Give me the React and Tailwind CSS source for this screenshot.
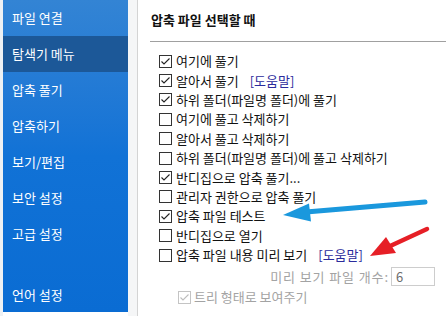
import React from 'react';

const menus = ['파일 연결', '탐색기 메뉴', '압축 풀기', '압축하기', '보기/편집', '보안 설정', '고급 설정'];

const options = [
  { label: '여기에 풀기', checked: true },
  { label: '알아서 풀기', checked: true, help: true },
  { label: '하위 폴더(파일명 폴더)에 풀기', checked: true },
  { label: '여기에 풀고 삭제하기', checked: false },
  { label: '알아서 풀고 삭제하기', checked: false },
  { label: '하위 폴더(파일명 폴더)에 풀고 삭제하기', checked: false },
  { label: '반디집으로 압축 풀기...', checked: true },
  { label: '관리자 권한으로 압축 풀기', checked: false },
  { label: '압축 파일 테스트', checked: true },
  { label: '반디집으로 열기', checked: false },
  { label: '압축 파일 내용 미리 보기', checked: false, help: true },
];

const CheckBox = ({ checked, disabled }) => (
  <span
    className={`flex h-[13px] w-[13px] shrink-0 items-center justify-center border bg-white ${
      disabled ? 'border-[#c4c4c4]' : 'border-[#333333]'
    }`}
  >
    {checked && (
      <svg width="11" height="11" viewBox="0 0 11 11">
        <path
          d="M1.5 5.5 L4 8 L9.5 2.5"
          fill="none"
          stroke={disabled ? '#bdbdbd' : '#222222'}
          strokeWidth="1.1"
        />
      </svg>
    )}
  </span>
);

const App = () => {
  return (
    <div className="relative flex h-[316px] w-[446px] overflow-hidden bg-white font-['Malgun_Gothic','Noto_Sans_CJK_KR',sans-serif] text-[13px] text-[#111111]">
      {/* left edge */}
      <div className="w-[3px] bg-[#eef1f4]" />

      {/* sidebar */}
      <nav className="flex h-[312px] w-[125px] flex-col bg-gradient-to-b from-[#3384d4] via-[#1172d6] to-[#0a6cd3] text-white">
        {menus.map((m, i) => (
          <div
            key={m}
            className={`flex h-9 items-center pl-[9px] ${i === 1 ? 'bg-[#1c5898]' : ''}`}
          >
            {m}
          </div>
        ))}
        <div className="mt-auto mb-[-1px] flex h-9 items-center pl-[9px]">언어 설정</div>
      </nav>

      {/* divider */}
      <div className="w-[10px] border-r border-[#d4d4d4] bg-[#f5f6f7]" />

      {/* content */}
      <main className="flex flex-1 flex-col pt-[12px]">
        <div className="h-4 pl-[13px] font-bold leading-4">압축 파일 선택할 때</div>
        <div className="mt-[13px] ml-[12px] h-px bg-[#a0a0a0]" />

        <div className="mt-[9.5px] flex flex-col pl-[21px]">
          {options.map((o) => (
            <div key={o.label} className="flex h-[19.4px] items-center">
              <CheckBox checked={o.checked} />
              <span className="ml-[4px] leading-4">{o.label}</span>
              {o.help && <span className="ml-[11px] leading-4 text-[#2b2b9c]">[도움말]</span>}
            </div>
          ))}
        </div>

        <div className="mt-[1px] flex h-[22px] items-center justify-end pr-[11px] text-[#a3a3a3]">
          <span className="leading-4 tracking-[0.9px]">미리 보기 파일 개수:</span>
          <div className="ml-[2px] flex h-[19px] w-[44px] items-center border border-[#cdcdcd] pl-[4px] text-[#6d6d6d]">
            6
          </div>
        </div>

        <div className="flex h-[19.4px] items-center pl-[40px] text-[#a3a3a3]">
          <CheckBox checked disabled />
          <span className="ml-[3px] leading-4">트리 형태로 보여주기</span>
        </div>
      </main>

      {/* annotation arrows */}
      <svg className="pointer-events-none absolute inset-0" width="446" height="316" viewBox="0 0 446 316">
        <line x1="425" y1="202" x2="306" y2="212" stroke="#1a98dd" strokeWidth="5" strokeLinecap="round" />
        <polygon points="283,215 311,221.5 309,203.5" fill="#1a98dd" />
        <line x1="427" y1="229" x2="388" y2="247" stroke="#e61f26" strokeWidth="4.5" strokeLinecap="round" />
        <polygon points="370,256 396,253 386,237" fill="#e61f26" />
      </svg>
    </div>
  );
};

export default App;
